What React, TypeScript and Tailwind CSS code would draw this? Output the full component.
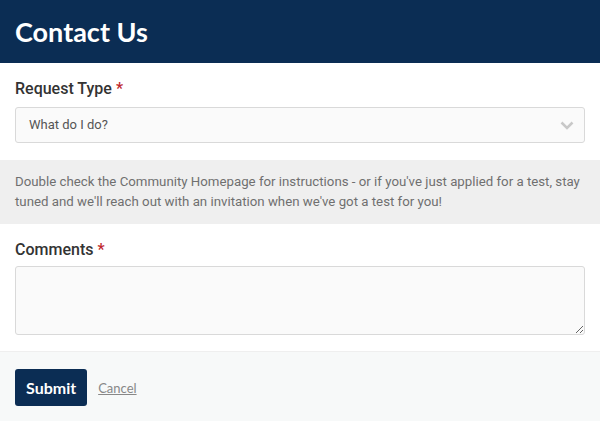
import React from "react";

export default function App() {
  return (
    <div className="w-[600px] h-[421px] bg-white overflow-hidden flex flex-col" style={{ fontFamily: "Roboto, sans-serif" }}>
      <div className="h-[63px] bg-[#0b2d54] flex items-center px-[15px]">
        <h1 className="text-white text-[27px] font-bold leading-none" style={{ fontFamily: "Lato, sans-serif" }}>Contact Us</h1>
      </div>
      <div className="px-[15px] pt-[16px]">
        <div className="text-[16px] font-medium text-[#333] leading-[20px]">
          Request Type <span className="text-[#c0272d]">*</span>
        </div>
        <div className="mt-[8px] h-[36px] border border-[#d9d9d9] rounded-[3px] bg-[#fafafa] flex items-center justify-between pl-[13px] pr-[10px]">
          <span className="text-[13px] text-[#555]">What do I do?</span>
          <svg width="14" height="9" viewBox="0 0 14 9" fill="none">
            <path d="M1.5 1.5 L7 7 L12.5 1.5" stroke="#c8c8c8" strokeWidth="2.5" />
          </svg>
        </div>
      </div>
      <div className="mt-[17px] h-[64px] bg-[#efefef] px-[15px] flex items-center">
        <p className="text-[13.25px] leading-[20px] text-[#6f6f6f]">
          Double check the Community Homepage for instructions - or if you've just applied for a test, stay tuned and we'll reach out with an invitation when we've got a test for you!
        </p>
      </div>
      <div className="px-[15px] pt-[16px]">
        <div className="text-[16px] font-medium text-[#333] leading-[20px]">
          Comments <span className="text-[#c0272d]">*</span>
        </div>
        <textarea className="mt-[6px] block w-full h-[69px] border border-[#d9d9d9] rounded-[3px] bg-[#fafafa] outline-none" />
      </div>
      <div className="mt-[16px] flex-1 bg-[#f7f9f9] border-t border-[#efefef] px-[15px] pt-[17px] flex items-start gap-[11px]">
        <button className="h-[37px] px-[11px] bg-[#0b2d54] rounded-[3px] text-white text-[16px] font-bold" style={{ fontFamily: "Lato, sans-serif" }}>Submit</button>
        <a className="mt-[10px] text-[13px] text-[#888] underline" style={{ fontFamily: "Lato, sans-serif" }}>Cancel</a>
      </div>
    </div>
  );
}
